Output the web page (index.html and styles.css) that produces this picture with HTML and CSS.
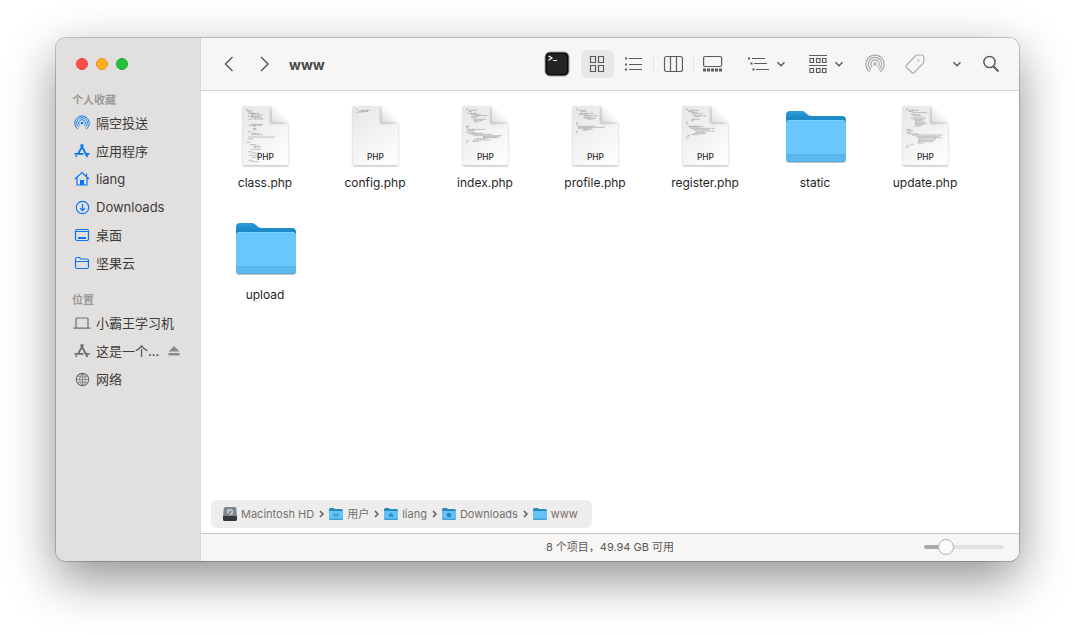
FILE: index.html
```html
<!DOCTYPE html>
<html lang="zh-CN">
<head>
    <meta charset="UTF-8">
    <title>www</title>
    <link rel="stylesheet" href="styles.css">
</head>
<body>
    <!-- Shared shapes -->
    <svg class="defs" aria-hidden="true">
        <defs>
            <linearGradient id="paper" x1="0" y1="0" x2="0.6" y2="1">
                <stop offset="0" stop-color="#e6e6e6"/>
                <stop offset="1" stop-color="#fcfcfc"/>
            </linearGradient>
            <linearGradient id="fold" x1="0" y1="1" x2="0.6" y2="0.4">
                <stop offset="0" stop-color="#dcdcdc"/>
                <stop offset="1" stop-color="#ffffff"/>
            </linearGradient>
            <linearGradient id="folder-back" x1="0" y1="0" x2="0" y2="1">
                <stop offset="0" stop-color="#2f9cd8"/>
                <stop offset="0.2" stop-color="#1583c4"/>
                <stop offset="1" stop-color="#1583c4"/>
            </linearGradient>
            <filter id="soft" x="-20%" y="-20%" width="140%" height="140%">
                <feGaussianBlur stdDeviation="3"/>
            </filter>
        </defs>
        <symbol id="page" viewBox="0 0 192 192">
            <path d="M30 10h84l51 50v126H30z" fill="#000" opacity="0.35" filter="url(#soft)"/>
            <path d="M29 9q0-3 3-3h84l50 50v125q0 3-3 3H32q-3 0-3-3z" fill="url(#paper)"/>
            <path d="M113 8l-2 46q0 6 6 6l46-3z" fill="#777" opacity="0.4" filter="url(#soft)"/>
            <path d="M116 6v45q0 4 4 4h46z" fill="url(#fold)"/>
        </symbol>
        <symbol id="folder" viewBox="0 0 64 54">
            <path d="M3 48h60v2q0 3-3 3H6q-3 0-3-3z" fill="#7f8c94" opacity="0.5"/>
            <path d="M3 5q0-4 4-4h12q2 0 4 2l2 2q2 1 4 1h30q4 0 4 4v38H3z" fill="url(#folder-back)"/>
            <path d="M3 13q0-3 3-3h54q3 0 3 3v35q0 4-4 4H7q-4 0-4-4z" fill="#68c7fb"/>
            <path d="M3 45h60v3q0 4-4 4H7q-4 0-4-4z" fill="#5bb9ed"/>
            <path d="M3 45h60M4 50q1 1.500 3 1.500h52q2 0 3-1.500" stroke="#4aa6da" stroke-width="0.8" fill="none"/>
            <path d="M5 10.400h56" stroke="#85d5fd" stroke-width="0.8"/>
        </symbol>
        <symbol id="chevron" viewBox="0 0 10 8">
            <path d="M1.500 2.200l3.500 3.500 3.500-3.500" class="line-bold"/>
        </symbol>
        <symbol id="airdrop" viewBox="0 0 20 20">
            <path d="M5 17.800a9.100 9.100 0 1 1 10 0M6 15.400a6.700 6.700 0 1 1 8 0M7.200 13.200a4.200 4.200 0 1 1 5.600 0" class="line"/>
            <circle cx="10" cy="10" r="1.700" fill="currentColor"/>
        </symbol>
        <symbol id="apps" viewBox="0 0 16 16">
            <path d="M9.200 1.500L4 11M6.800 1.500l6.700 12.500M0.500 10.800h9M12 10.800h3.500M2.600 12.500l-.8 1.300" class="line-heavy"/>
        </symbol>
        <symbol id="small-folder" viewBox="0 0 14 12">
            <path d="M0 1.500Q0 0 1.500 0h3l1.500 1h6.500Q14 1 14 2.500V10H0z" fill="#2788bd"/>
            <path d="M0 3h14v7.500q0 1.500-1.500 1.500h-11Q0 12 0 10.500z" fill="#63c3f7"/>
            <path d="M0 10.500h14q0 1.500-1.500 1.500h-11Q0 12 0 10.500z" fill="#459fcf"/>
        </symbol>
    </svg>

    <div class="window">
        <aside class="sidebar">
            <div class="lights">
                <button class="light red" aria-label="关闭"></button>
                <button class="light yellow" aria-label="最小化"></button>
                <button class="light green" aria-label="全屏"></button>
            </div>

            <h2>个人收藏</h2>
            <ul class="places favorites">
                <li><a href="#airdrop"><svg viewBox="0 0 20 20"><use href="#airdrop"/></svg><span>隔空投送</span></a></li>
                <li><a href="#apps"><svg viewBox="0 0 16 16"><use href="#apps"/></svg><span>应用程序</span></a></li>
                <li><a href="#liang">
                    <svg viewBox="0 0 16 16"><path d="M1 8l7-6.500L15 8M3 6.500V14h10V6.500M12.500 5V2.500" class="line"/><path d="M6 9h4v5H6z" fill="currentColor"/></svg>
                    <span>liang</span></a></li>
                <li><a href="#downloads">
                    <svg viewBox="0 0 16 16"><circle cx="8.500" cy="8.500" r="6.200" class="line"/><path d="M8.500 5v6.500M6 9.200l2.500 2.500L11 9.200" class="line"/></svg>
                    <span>Downloads</span></a></li>
                <li><a href="#desktop">
                    <svg viewBox="0 0 16 16"><rect x="1.500" y="2.500" width="13" height="11" rx="1.500" class="line"/><path d="M2 4.500h12" class="line"/><path d="M4 10h8v2H4z" fill="currentColor"/></svg>
                    <span>桌面</span></a></li>
                <li><a href="#nutstore">
                    <svg viewBox="0 0 16 16"><path d="M1.500 12V4q0-1.500 1.500-1.500h2.500L7 4h6q1.500 0 1.500 1.500V12q0 1.500-1.500 1.500H3Q1.500 13.500 1.500 12zM1.500 6.500h13" class="line"/></svg>
                    <span>坚果云</span></a></li>
            </ul>

            <h2>位置</h2>
            <ul class="places">
                <li><a href="#computer">
                    <svg viewBox="0 0 16 16"><path d="M2 12.500V4q0-1 1-1h10q1 0 1 1v8.500M-.5 13.200h17" class="line"/></svg>
                    <span>小霸王学习机</span></a></li>
                <li><a href="#disk"><svg viewBox="0 0 16 16"><use href="#apps"/></svg><span>这是一个…</span></a>
                    <button class="eject" aria-label="推出"><svg viewBox="0 0 12 10"><path d="M6 0l5.500 5.500h-11zM.5 7h11v2.500H.5z" fill="currentColor"/></svg></button></li>
                <li><a href="#network">
                    <svg viewBox="0 0 16 16"><circle cx="8.500" cy="8.500" r="6.200" class="line"/><path d="M8.500 2.200v12.600M2.200 8.500h12.600M3.800 5q4.700 2.500 9.400 0M3.800 12q4.700-2.500 9.400 0M8.500 2.200q-6 6.300 0 12.600M8.500 2.200q6 6.300 0 12.600" class="line-thin"/></svg>
                    <span>网络</span></a></li>
            </ul>
        </aside>

        <main class="main">
            <header class="toolbar">
                <div class="nav">
                    <button aria-label="后退"><svg width="12" height="18" viewBox="0 0 12 18"><path d="M9.500 2L2.500 9l7 7" class="line-bold"/></svg></button>
                    <button aria-label="前进"><svg width="12" height="18" viewBox="0 0 12 18"><path d="M2 2l7 7-7 7" class="line-bold"/></svg></button>
                </div>
                <h1>www</h1>

                <button class="terminal" aria-label="终端">
                    <svg width="26" height="26" viewBox="0 0 26 26">
                        <rect x="1" y="1" width="24" height="24" rx="5" fill="#0a0a0a" stroke="#9aa1a3" stroke-width="1"/>
                        <rect x="3" y="3" width="20" height="20" rx="3" fill="#242424"/>
                        <path d="M4.500 5l3.500 2-3.500 2.200M9 9.500h4" fill="none" stroke="#fff" stroke-width="1.200"/>
                    </svg>
                </button>

                <div class="views">
                    <button class="active" aria-label="图标">
                        <svg width="18" height="18" viewBox="0 0 18 18"><path d="M2.500 1.500h5v6h-5zM10.500 1.500h5v6h-5zM2.500 10.500h5v6h-5zM10.500 10.500h5v6h-5z" class="line"/></svg>
                    </button>
                    <button aria-label="列表">
                        <svg width="18" height="18" viewBox="0 0 18 18"><path d="M5 3.500h13M5 9.500h13M5 14.500h13" class="line"/><path d="M1 2.500h2v2H1zM1 8.500h2v2H1zM1 13.500h2v2H1z" fill="currentColor"/></svg>
                    </button>
                    <i></i>
                    <button aria-label="分栏">
                        <svg width="20" height="18" viewBox="0 0 20 18"><rect x="1.500" y="1.500" width="18" height="15" rx="2" class="line"/><path d="M7.500 1.500v15M13.500 1.500v15" class="line"/></svg>
                    </button>
                    <i></i>
                    <button aria-label="画廊">
                        <svg width="20" height="18" viewBox="0 0 20 18"><rect x="0.600" y="1.500" width="18" height="10" rx="1.500" class="line"/><path d="M0 15h19" fill="none" stroke="currentColor" stroke-width="3" stroke-dasharray="3 1"/></svg>
                    </button>
                </div>

                <div class="actions">
                    <button class="pulldown" aria-label="分组">
                        <svg width="22" height="18" viewBox="0 0 22 18"><path d="M4 3.500h13M6 8.500h13M8 14.500h13" class="line"/><path d="M0 2.500h2v2H0zM2.500 7.500h2v2h-2zM4.500 13.500h2v2h-2z" fill="currentColor"/></svg>
                        <svg width="10" height="8"><use href="#chevron"/></svg>
                    </button>
                    <button class="pulldown" aria-label="排列">
                        <svg width="20" height="20" viewBox="0 0 20 20"><path d="M1 1.500h18M1 11.500h18M2 4.500h3.500v4H2zM8.500 4.500H12v4H8.500zM14.500 4.500H18v4h-3.500zM2 14.500h3.500v4H2zM8.500 14.500H12v4H8.500zM14.500 14.500H18v4h-3.500z" class="line"/></svg>
                        <svg width="10" height="8"><use href="#chevron"/></svg>
                    </button>
                    <button class="faded" aria-label="共享"><svg width="20" height="20"><use href="#airdrop"/></svg></button>
                    <button class="faded" aria-label="标签">
                        <svg width="20" height="20" viewBox="0 0 20 20"><path d="M1.500 11L10.500 1.800q1-.8 2.300-.8h4q2 0 2 2v4q0 1.300-.8 2.300L9.300 18.500q-1.300 1.200-2.500 0L1.500 13.500q-1-1.200 0-2.500z" class="line"/><circle cx="13.500" cy="6.500" r="1" fill="currentColor"/></svg>
                    </button>
                    <button class="more" aria-label="更多"><svg width="10" height="8"><use href="#chevron"/></svg></button>
                    <button class="search" aria-label="搜索">
                        <svg width="18" height="18" viewBox="0 0 18 18"><circle cx="7.500" cy="7" r="5.600" class="line-bold"/><path d="M11.500 11.500l5 5" fill="none" stroke="currentColor" stroke-width="2"/></svg>
                    </button>
                </div>
            </header>

            <ul class="files">
                <li>
                    <svg class="icon" viewBox="0 0 192 192"><use href="#page"/><path class="code" d="M39 17h5M41 20h14M44 24h14M47 29h18M55 28h26M45 37h7M54 33h36M54 37h28M54 41h34M47 46h10M62 45h30M55 61h35M47 64h40M60 67h7M60 74h10M60 77h12M44 83h11M55 88h22M55 92h34M46 99h8M55 99h70M46 105h14M41 115h12M52 122h18M62 126h20M62 130h18M55 136h30M46 143h12M55 147h22M47 154h28M56 160h24M47 169h12M56 173h20"/><text x="97" y="168" class="page-type">PHP</text></svg>
                    <span>class.php</span>
                </li>
                <li>
                    <svg class="icon" viewBox="0 0 192 192"><use href="#page"/><path class="code" d="M39 16h5M44 24h18M50 20h24M55 22h20M70 19h12M40 26h3"/><text x="97" y="168" class="page-type">PHP</text></svg>
                    <span>config.php</span>
                </li>
                <li>
                    <svg class="icon" viewBox="0 0 192 192"><use href="#page"/><path class="code" d="M39 16h6M47 19h25M47 22h10M44 28h28M52 31h30M62 35h42M55 38h22M55 42h15M62 46h38M62 50h28M64 54h12M39 67h12M39 71h6M41 76h55M45 79h20M40 84h25M47 88h42M55 91h62M62 95h85M90 98h50M90 101h48M69 104h32M60 108h52M58 112h20M39 110h7M39 116h4"/><text x="97" y="168" class="page-type">PHP</text></svg>
                    <span>index.php</span>
                </li>
                <li>
                    <svg class="icon" viewBox="0 0 192 192"><use href="#page"/><path class="code" d="M39 16h6M47 19h20M54 22h17M51 28h42M45 31h32M62 35h42M62 39h20M62 42h37M72 45h19M39 57h6M39 61h5M43 67h52M46 70h80M46 73h38M62 76h28M58 79h15M39 82h5M39 86h4"/><text x="97" y="168" class="page-type">PHP</text></svg>
                    <span>profile.php</span>
                </li>
                <li>
                    <svg class="icon" viewBox="0 0 192 192"><use href="#page"/><path class="code" d="M39 16h6M47 19h31M45 22h15M54 25h20M58 29h30M61 35h38M65 38h15M55 46h24M54 50h6M39 54h6M39 60h5M45 67h45M50 69h30M52 73h74M60 77h50M68 81h55M68 85h30M62 89h36M55 92h20M43 95h8M39 99h8M39 104h4"/><text x="97" y="168" class="page-type">PHP</text></svg>
                    <span>register.php</span>
                </li>
                <li>
                    <svg class="icon folder" viewBox="0 0 64 54"><use href="#folder"/></svg>
                    <span>static</span>
                </li>
                <li>
                    <svg class="icon" viewBox="0 0 192 192"><use href="#page"/><path class="code" d="M39 16h6M47 19h30M47 22h12M58 26h45M54 32h27M62 36h25M54 42h45M62 46h32M66 50h22M66 54h30M66 58h34M66 62h28M64 66h20M39 77h15M43 81h20M39 86h15M46 90h32M57 93h92M69 97h70M75 101h72M75 105h54M75 109h50M74 113h46M74 117h18M52 121h10M41 125h6M39 130h6"/><text x="97" y="168" class="page-type">PHP</text></svg>
                    <span>update.php</span>
                </li>
                <li>
                    <svg class="icon folder" viewBox="0 0 64 54"><use href="#folder"/></svg>
                    <span>upload</span>
                </li>
            </ul>

            <nav class="path" aria-label="路径">
                <a href="#hd">
                    <svg width="14" height="14" viewBox="0 0 14 14"><path d="M2 0h10q1 0 1.200 1L14 9H0L.8 1Q1 0 2 0z" fill="#7d868b"/><path d="M0 9h14v3.500q0 1.500-1.500 1.500h-11Q0 14 0 12.500z" fill="#35393b"/><circle cx="7" cy="5" r="3.300" fill="#b8c2c6"/><path d="M5 8l3-4" stroke="#4d5659"/></svg>
                    Macintosh HD</a>
                <svg class="sep" viewBox="0 0 5 8"><path d="M1 1l3 3-3 3" class="line-bold"/></svg>
                <a href="#users"><svg width="14" height="14" viewBox="0 -1 14 14"><use href="#small-folder" width="14" height="12"/><path d="M5.500 5.500v3M8.500 5.500v3" stroke="#2584bd" stroke-width="1.500"/></svg>用户</a>
                <svg class="sep" viewBox="0 0 5 8"><path d="M1 1l3 3-3 3" class="line-bold"/></svg>
                <a href="#home"><svg width="14" height="14" viewBox="0 -1 14 14"><use href="#small-folder" width="14" height="12"/><path d="M4 7.500l3-3 3 3H9V9H5V7.500z" fill="#2f91cb"/></svg>liang</a>
                <svg class="sep" viewBox="0 0 5 8"><path d="M1 1l3 3-3 3" class="line-bold"/></svg>
                <a href="#home-downloads"><svg width="14" height="14" viewBox="0 -1 14 14"><use href="#small-folder" width="14" height="12"/><circle cx="7" cy="7" r="2.300" fill="#2584bd"/></svg>Downloads</a>
                <svg class="sep" viewBox="0 0 5 8"><path d="M1 1l3 3-3 3" class="line-bold"/></svg>
                <a href="#www"><svg width="14" height="14" viewBox="0 -1 14 14"><use href="#small-folder" width="14" height="12"/></svg>www</a>
            </nav>

            <footer class="status">
                <span class="summary">8 个项目，49.94 GB 可用</span>
                <input type="range" min="0" max="100" value="22" aria-label="图标大小">
            </footer>
        </main>
    </div>
</body>
</html>
```
FILE: styles.css
```css
* {
    box-sizing: border-box;
}
body {
    display: flex;
    min-height: 100vh;
    margin: 0;
    padding: 38px 56px 74px;
    background-color: #fff;
    font-family: Inter, "Noto Sans CJK SC", sans-serif;
    font-size: 12px;
    color: #262626;
}
h1, h2, ul {
    margin: 0;
    padding: 0;
}
ul {
    list-style: none;
}
a {
    color: inherit;
    text-decoration: none;
}
button {
    display: flex;
    align-items: center;
    justify-content: center;
    padding: 0;
    border: none;
    background: none;
    color: inherit;
}
.defs {
    position: absolute;
    width: 0;
    height: 0;
}
.line, .line-bold, .line-heavy, .line-thin {
    fill: none;
    stroke: currentColor;
    stroke-width: 1.2;
}
.line-bold {
    stroke-width: 1.5;
}
.line-heavy {
    stroke-width: 1.8;
}
.line-thin {
    stroke-width: 0.7;
}

.window {
    display: flex;
    flex: 1;
    overflow: hidden;
    border-radius: 10px;
    box-shadow: 0 0 0 1px rgba(0, 0, 0, 0.2), 0 18px 50px rgba(0, 0, 0, 0.44);
}

/* Sidebar */
.sidebar {
    flex: none;
    width: 145px;
    padding: 20px 16px;
    background-color: #e1e0de;
    border-right: 1px solid #d9d8d6;
}
.lights {
    display: flex;
    gap: 8px;
    padding: 0 4px;
    margin-bottom: 22px;
}
.light {
    width: 12px;
    height: 12px;
    border-radius: 50%;
}
.red {
    background-color: #fe5049;
    border: 1px solid #e1443e;
}
.yellow {
    background-color: #feb024;
    border: 1px solid #df9a1d;
}
.green {
    background-color: #27c036;
    border: 1px solid #20a82d;
}
.sidebar h2 {
    height: 17px;
    font-size: 11px;
    line-height: 17px;
    font-weight: 700;
    color: #9a9997;
}
.places {
    margin-bottom: 15px;
}
.places li {
    display: flex;
    align-items: center;
    height: 28px;
}
.places a {
    display: flex;
    align-items: center;
    gap: 6px;
    padding-left: 2px;
    font-size: 13px;
    line-height: 18px;
    white-space: nowrap;
    color: #3d3c3b;
}
.places a svg {
    width: 16px;
    height: 16px;
    overflow: visible;
    color: #6f6e6d;
}
.favorites a svg {
    color: #0a76f5;
}
.eject {
    margin-left: 9px;
    color: #8b8a89;
}
.eject svg {
    width: 12px;
    height: 10px;
}

/* Toolbar */
.main {
    display: flex;
    flex: 1;
    flex-direction: column;
    min-width: 0;
    background-color: #fff;
}
.toolbar {
    display: flex;
    align-items: center;
    height: 53px;
    padding: 0 16px 0 22px;
    background-color: #f7f6f4;
    border-bottom: 1px solid #d2d1cf;
    color: #5c5b5a;
}
.nav {
    display: flex;
    gap: 24px;
}
.toolbar h1 {
    margin-left: 18px;
    font-size: 14px;
    font-weight: 700;
    color: #4a4948;
}
.terminal {
    margin-left: auto;
}
.views {
    display: flex;
    align-items: center;
    gap: 3px;
    margin: 0 7px 0 11px;
}
.views button {
    width: 33px;
    height: 28px;
    padding-right: 1px;
    border-radius: 6px;
}
.views .active {
    background-color: #e9e8e6;
}
.views i {
    width: 1px;
    height: 20px;
    background-color: #e3e2e0;
}
.actions {
    display: flex;
    align-items: center;
}
.actions button {
    width: 40px;
    height: 28px;
}
.actions .pulldown {
    width: 59px;
    gap: 6px;
}
.actions .more {
    width: 44px;
}
.actions .search {
    width: 24px;
}
.faded {
    color: #adacab;
}

/* Files */
.files {
    display: grid;
    flex: 1;
    grid-template-columns: repeat(auto-fill, 110px);
    grid-auto-rows: 112px;
    padding: 13px 9px;
}
.files li {
    display: flex;
    flex-direction: column;
    align-items: center;
    gap: 6px;
    line-height: 18px;
    color: #1f1f1f;
}
.icon {
    width: 64px;
    height: 64px;
}
.folder {
    padding: 6px 0 4px;
}
.page-type {
    font-size: 25px;
    font-weight: 500;
    text-anchor: middle;
    fill: #2b2b2b;
}
.code {
    fill: none;
    stroke: #777;
    stroke-width: 2;
    stroke-dasharray: 9 1 5 1;
    opacity: 0.7;
}

/* Path and status */
.path {
    display: flex;
    align-items: center;
    align-self: flex-start;
    gap: 5px;
    height: 28px;
    margin: 0 10px 5px;
    padding: 0 14px 0 12px;
    border-radius: 6px;
    background-color: #efedeb;
    font-size: 11px;
    line-height: 16px;
    color: #737271;
}
.path a {
    display: flex;
    align-items: center;
    gap: 4px;
}
.path .sep {
    width: 5px;
    height: 8px;
    color: #5c5b5a;
}
.status {
    display: grid;
    grid-template-columns: 1fr auto 1fr;
    align-items: center;
    height: 28px;
    padding: 0 15px 2px;
    background-color: #f7f6f4;
    border-top: 1px solid #c9c8c4;
    font-size: 11px;
    line-height: 16px;
    color: #5a5958;
}
.summary {
    grid-column: 2;
}
.status input {
    justify-self: end;
    width: 80px;
    height: 16px;
    margin: 0;
    appearance: none;
    background: none;
}
.status input::-webkit-slider-runnable-track {
    height: 4px;
    border-radius: 2px;
    background: linear-gradient(to right, #aaa9a7 25%, #e2e1df 25%);
}
.status input::-webkit-slider-thumb {
    width: 16px;
    height: 16px;
    margin-top: -6px;
    appearance: none;
    border: 1px solid #b5b4b2;
    border-radius: 50%;
    background-color: #fafafa;
}
```
